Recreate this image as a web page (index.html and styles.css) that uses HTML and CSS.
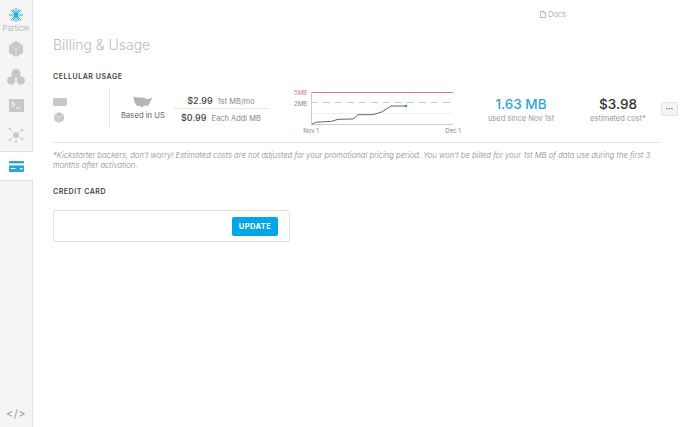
FILE: index.html
```html
<!DOCTYPE html>
<html lang="en">
<head>
<meta charset="utf-8">
<title>Billing &amp; Usage</title>
<link rel="stylesheet" href="styles.css">
</head>
<body>
<div class="app">
  <nav class="sidebar">
    <div class="brand">
      <svg class="star" width="14" height="14" viewBox="0 0 14 14" fill="none" stroke="#00a6e0" stroke-width=".9"><path d="M7 0v14M0 7h14M2 2l10 10M12 2L2 12M4 1l6 12M10 1L4 13"/><circle cx="7" cy="7" r="1.500" fill="#00a6e0" stroke="none"/></svg>
      <span class="brand-name">Particle</span>
    </div>
    <a class="nav-item"><svg width="14" height="16" viewBox="0 0 14 16"><path fill="#c8c8c8" d="M7 0l7 4v8l-7 4-7-4V4z"/><path fill="none" stroke="#dedede" stroke-width=".8" d="M0 4l7 4 7-4M7 8v8"/></svg></a>
    <a class="nav-item n2"><svg width="18" height="16" viewBox="0 0 18 16" fill="#c8c8c8"><circle cx="9" cy="4.500" r="4.500"/><circle cx="4.200" cy="11.500" r="4.200"/><circle cx="13.800" cy="11.500" r="4.200"/></svg></a>
    <a class="nav-item"><svg width="15" height="13" viewBox="0 0 15 13"><rect width="15" height="13" fill="#c8c8c8"/><path fill="none" stroke="#f4f4f4" stroke-width="1.200" d="M2.500 3l3 2.500-3 2.500M7 9h5"/></svg></a>
    <a class="nav-item"><svg width="16" height="16" viewBox="0 0 16 16" fill="#c8c8c8" stroke="#c8c8c8" stroke-width=".7"><path d="M8 8L2 2M8 8l6-5M8 8l-6 5M8 8l6 4M8 8v7"/><circle cx="8" cy="8" r="2.600"/><circle cx="2" cy="2" r="1"/><circle cx="14" cy="3" r="1"/><circle cx="2" cy="13" r="1"/><circle cx="14" cy="12" r="1"/><circle cx="8" cy="15" r=".8"/></svg></a>
    <a class="nav-item active"><svg width="15" height="11" viewBox="0 0 15 11"><rect width="15" height="11" rx="1" fill="#2ba6d8"/><rect y="2.400" width="15" height="2" fill="#fff"/><rect x="1.500" y="7" width="5" height="1" fill="#fff"/><rect x="11" y="7" width="2.500" height="1.400" fill="#fff"/></svg></a>
    <a class="nav-code">&lt;/&gt;</a>
  </nav>
  <main class="main">
    <div class="topbar">
      <a class="docs"><svg width="6" height="7" viewBox="0 0 6 7" fill="none" stroke="#999" stroke-width=".7"><path d="M.4.4h3.400l1.800 1.800v4.400H.4zM3.800.4v1.800h1.800"/></svg>Docs</a>
    </div>
    <h1 class="title">Billing &amp; Usage</h1>
    <h2 class="section-label">CELLULAR USAGE</h2>
    <section class="usage">
      <div class="device">
        <svg width="14" height="8" viewBox="0 0 14 8"><path fill="#c8c8c8" d="M1 0h13v6.500l-1 1.500H1a1 1 0 0 1-1-1V1a1 1 0 0 1 1-1z"/></svg>
        <svg width="10" height="11" viewBox="0 0 14 16"><path fill="#c8c8c8" d="M7 0l7 4v8l-7 4-7-4V4z"/><path fill="none" stroke="#e4e4e4" d="M0 4l7 4 7-4M7 8v8"/></svg>
      </div>
      <div class="region">
        <svg width="20" height="11" viewBox="0 0 21 12"><path fill="#b4b4b4" d="M0 0l12 .8 1.500 1 1-.3 1.500 1 5-2-2.500 4-1 3-1.300 .8.500 3.500-1.500-2.600-4 .300-1.500 2-2.500-1.700-3.500-.3L1.500 6z"/></svg>
        <span>Based in US</span>
      </div>
      <div class="rates">
        <div class="rate rate-first"><b>$2.99</b><span>1st MB/mo</span></div>
        <div class="rate"><b>$0.99</b><span>Each Addl MB</span></div>
      </div>
      <figure class="chart">
        <svg width="180" height="47" viewBox="0 0 180 47">
          <text class="lim" x="13" y="8" text-anchor="end">5MB</text>
          <text class="tick" x="13" y="18.500" text-anchor="end">2MB</text>
          <path d="M17 5.500H159" stroke="#c9827c" fill="none"/>
          <path d="M17 15.500H159" stroke="#ccc" stroke-dasharray="7 5" fill="none"/>
          <path d="M17 26.500H159" stroke="#eee" fill="none"/>
          <path d="M17.500 5v32.500H159" stroke="#ccc" fill="none"/>
          <path d="M17.700 37.500L21.700 35.300 37.700 34.300 44 32.300 59 32 64 27.700 78.700 27.700 87.700 25 97 19H112" stroke="#666" fill="none"/>
          <circle cx="112" cy="19" r="1.300" fill="#00a6e0"/>
          <text class="tick" x="17" y="46" text-anchor="middle">Nov 1</text>
          <text class="tick" x="159" y="46" text-anchor="middle">Dec 1</text>
        </svg>
      </figure>
      <div class="stat stat-used"><strong>1.63 MB</strong><span>used since Nov 1st</span></div>
      <div class="stat stat-cost"><strong>$3.98</strong><span>estimated cost*</span></div>
      <button class="more" type="button">•••</button>
    </section>
    <p class="note">*Kickstarter backers, don’t worry! Estimated costs are not adjusted for your promotional pricing period. You won’t be billed for your 1st MB of data use during the first 3 months after activation.</p>
    <h2 class="section-label card-label">CREDIT CARD</h2>
    <section class="card">
      <button class="update" type="button">UPDATE</button>
    </section>
  </main>
</div>
</body>
</html>
```
FILE: styles.css
```css
* { box-sizing: border-box; }
html, body { margin: 0; height: 100%; }
body { font-family: Inter, "Open Sans", sans-serif; background: #fff; color: #444; overflow: hidden; }
.app { display: flex; height: 427px; }

.sidebar { width: 33px; flex: none; display: flex; flex-direction: column; background: #f5f5f5; border-right: 1px solid #dfdfdf; }
.brand { display: flex; flex-direction: column; align-items: center; padding-top: 8px; height: 34px; }
.star { flex: none; }
.brand-name { font-size: 8px; line-height: 10px; color: #aaa; font-weight: 300; margin-top: 1px; letter-spacing: -.1px; }
.nav-item { display: flex; align-items: center; justify-content: center; height: 29px; }
.n2 { margin-top: -1px; }
.active { height: 30px; margin-top: 2px; background: #fff; width: 33px; border-top: 1px solid #dfdfdf; border-bottom: 1px solid #dfdfdf; }
.nav-code { margin-top: auto; height: 27px; text-align: center; font-size: 11px; line-height: 28px; color: #999; letter-spacing: .5px; }

.main { flex: 1; padding: 0 20px; min-width: 0; }
.topbar { display: flex; height: 28px; padding: 10px 0 0 487px; }
.docs { display: flex; align-items: center; gap: 2px; height: 8px; font-size: 7.500px; color: #999; font-weight: 300; }
.title { margin: 8px 0 0; font-size: 14px; line-height: 18px; font-weight: 300; color: #bbb; }
.section-label { margin: 18px 0 0; font-size: 7px; line-height: 9px; font-weight: 600; letter-spacing: .55px; color: #444; }

.usage { display: flex; align-items: flex-start; height: 58px; margin-top: 4px; padding-top: 2px; border-bottom: 1px solid #e4e4e4; width: 607px; }
.usage > * { flex: none; }
.device { width: 57px; height: 40px; margin-top: 1px; padding-top: 10px; display: flex; flex-direction: column; align-items: flex-start; gap: 6px; border-right: 1px solid #e6e6e6; }
.device svg:last-child { margin-left: 1px; }
.region { width: 63px; display: flex; flex-direction: column; align-items: center; padding: 10px 0 0 3px; gap: 3px; font-size: 7.700px; color: #666; }
.rates { width: 96px; margin-top: 3px; font-size: 7.500px; color: #888; }
.rate { display: flex; align-items: baseline; justify-content: center; gap: 5px; height: 17px; padding-top: 3px; }
.rate b { font-size: 9px; font-weight: 500; color: #444; }
.rate-first { height: 19px; padding-top: 5px; border-bottom: 1px solid #e6e6e6; }
.chart { margin: 0 0 0 25px; width: 180px; height: 47px; }
.chart svg { display: block; }
.chart text { font-family: Inter, sans-serif; font-size: 6px; fill: #888; }
.chart .lim { fill: #c9827c; }
.stat { display: flex; flex-direction: column; align-items: center; padding-top: 8px; font-size: 7.500px; color: #999; }
.stat strong { font-size: 13.500px; line-height: 18px; margin-bottom: 1px; font-weight: 500; white-space: nowrap; }
.stat-used { width: 94px; }
.stat-used strong { color: #2ba6de; }
.stat-cost { width: 100px; }
.stat-cost strong { color: #333; }
.more { width: 17px; height: 14px; margin: 15px 0 0 -7px; padding: 0; border: 1px solid #e4e4e4; border-radius: 2px; background: #f4f4f4; color: #555; font-size: 4px; line-height: 12px; letter-spacing: .3px; font-family: Inter, sans-serif; }

.note { margin: 8px 0 0; width: 607px; font-size: 7.700px; line-height: 10px; font-style: italic; font-weight: 300; color: #888; }
.card-label { margin-top: 16px; }
.card { display: flex; align-items: center; justify-content: flex-end; width: 237px; height: 32px; margin-top: 14px; padding-right: 11px; border: 1px solid #e2e2e2; border-radius: 2px; }
.update { width: 46px; height: 19px; padding: 0; border: 0; border-radius: 2px; background: #00a6e6; color: #fff; font-family: Inter, sans-serif; font-size: 7.500px; font-weight: 700; letter-spacing: .4px; }
```
